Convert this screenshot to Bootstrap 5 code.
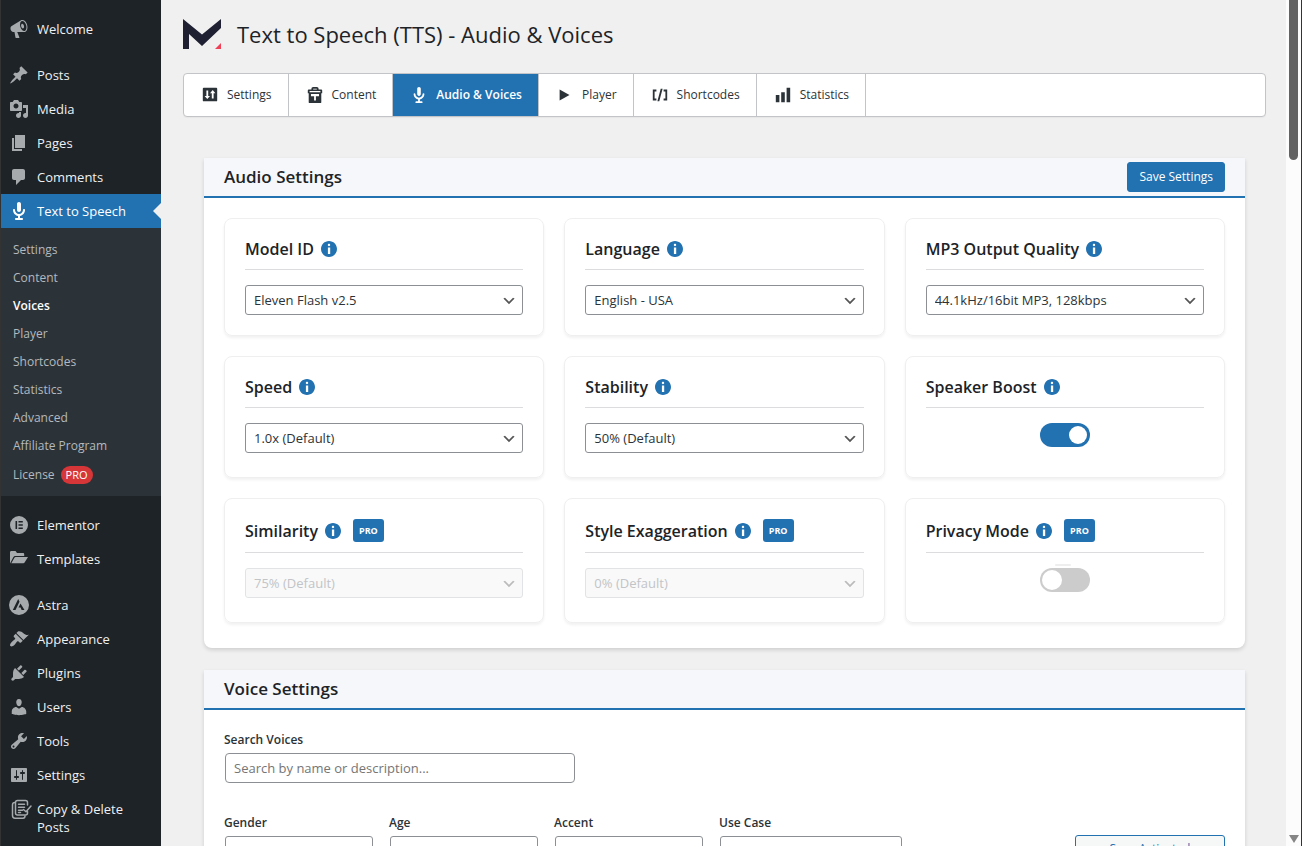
<!DOCTYPE html>
<html lang="en">
<head>
<meta charset="utf-8">
<meta name="viewport" content="width=device-width, initial-scale=1">
<title>Text to Speech (TTS) - Audio &amp; Voices</title>
<link href="https://cdn.jsdelivr.net/npm/bootstrap@5.3.0/dist/css/bootstrap.min.css" rel="stylesheet">
<style>
:root{--wp-blue:#2271b1;--wp-dark:#1d2327;--wp-sub:#2c3338;--wp-ink:#1d2327;--wp-icon:#a7aaad;}
body{font-family:"Open Sans","Noto Sans",sans-serif;font-size:13px;line-height:20px;color:#2c3338;background:#f0f0f0;}
svg{fill:currentColor;flex:none;}
.window-edge{width:1px;background:#333;}

/* Admin menu */
.admin-menu{width:160px;flex:none;background:var(--wp-dark);padding-top:12px;}
.menu-item{display:flex;align-items:flex-start;gap:8px;padding:8px 0 8px 8px;line-height:18px;color:#f0f0f1;text-decoration:none;position:relative;}
.menu-item svg{color:var(--wp-icon);margin:-1px 0;}
.gap-above{margin-top:12px;}
.menu-item.current{background:var(--wp-blue);color:#fff;}
.menu-item.current svg{color:#fff;}
.menu-item.current::after{content:"";position:absolute;right:0;top:9px;border:8px solid transparent;border-right-color:#f0f0f0;border-left:0;}
.submenu{background:var(--wp-sub);padding:8px 0 6px;font-size:12px;}
.submenu a{display:block;padding:4px 12px;color:#b4b9be;text-decoration:none;}
.submenu a.on{color:#fff;font-weight:600;}
.submenu a.license{display:flex;align-items:center;padding:5px 12px;}
.pro-pill{background:#d63638;color:#fff;font-size:11px;line-height:18px;padding:0 5px;margin-left:6px;}

/* Page header and tabs */
.tts-page{padding:14px 20px 0 22px;}
.app-head{margin:4px 0 23px;}
.app-title{font-size:22px;line-height:32px;font-weight:400;color:var(--wp-ink);}
.tabs{background:#fff;border:1px solid #c3c4c7;border-radius:4px;box-shadow:0 1px 1px rgba(0,0,0,.04);overflow:hidden;}
.tabs a{display:flex;align-items:center;gap:8px;height:42px;padding:0 16px 0 17px;border-right:1px solid #c3c4c7;color:#2c3338;text-decoration:none;font-size:12px;}
.tabs a.active{background:var(--wp-blue);color:#fff;font-weight:600;}
.tabs svg{color:var(--wp-sub);}
.tabs .active svg{color:#fff;}

/* Panels */
.panel-stack{padding:41px 21px 0;display:grid;gap:22px;}
.panel{background:#fff;border-radius:0 0 8px 8px;box-shadow:0 2px 4px rgba(0,0,0,.14);overflow:hidden;}
.panel-head{height:40px;background:#f6f7fb;border-bottom:2px solid var(--wp-blue);padding:0 20px;}
.panel-head h2{font-size:17px;line-height:20px;font-weight:600;color:var(--wp-ink);}
.btn-save{--bs-btn-color:#fff;--bs-btn-bg:var(--wp-blue);--bs-btn-border-color:var(--wp-blue);--bs-btn-hover-bg:#135e96;--bs-btn-hover-color:#fff;height:30px;padding:0 11px;font-size:12px;line-height:20px;border-radius:3px;}
.btn-line{--bs-btn-color:var(--wp-blue);--bs-btn-bg:#f6f7f7;--bs-btn-border-color:var(--wp-blue);--bs-btn-hover-bg:#f0f0f1;--bs-btn-hover-color:#135e96;width:150px;height:31px;padding:0 0 4px;font-size:12px;line-height:20px;border-radius:3px;}
.settings-grid{display:grid;grid-template-columns:repeat(3,1fr);gap:20px;padding:20px 20px 25px;}
.option{border:1px solid #efeff0;border-radius:8px;padding:20px;box-shadow:0 2px 3px rgba(0,0,0,.06);}
.option-title{display:flex;align-items:center;padding-bottom:10px;margin-bottom:15px;border-bottom:1px solid #dcdcde;font-size:16px;line-height:20px;font-weight:600;color:var(--wp-ink);}
.option-title svg{color:var(--wp-blue);margin-left:7px;}
.pro-tag{background:var(--wp-blue);color:#fff;font-size:9px;font-weight:700;line-height:23px;padding:0 6px;border-radius:3px;margin-left:12px;}

/* Controls */
.form-select,.form-control{height:30px;padding:0 24px 0 8px;font-size:13px;line-height:28px;color:#2c3338;border:1px solid #8c8f94;border-radius:3px;}
.form-select{background-image:url("data:image/svg+xml,%3Csvg xmlns='http://www.w3.org/2000/svg' viewBox='0 0 20 20'%3E%3Cpath d='M5 6l5 5 5-5 2 1-7 7-7-7z' fill='%23555'/%3E%3C/svg%3E");background-size:16px;background-position:right 5px top 55%;}
.form-select:disabled{background-color:#f9f9f9;border-color:#e2e3e5;color:#c2c4c7;background-image:url("data:image/svg+xml,%3Csvg xmlns='http://www.w3.org/2000/svg' viewBox='0 0 20 20'%3E%3Cpath d='M5 6l5 5 5-5 2 1-7 7-7-7z' fill='%23bbb'/%3E%3C/svg%3E");opacity:1;}
.form-control{border-radius:4px;}
.form-control::placeholder{color:#757575;}
.form-switch{height:34px;min-height:0;padding:0;position:relative;}
.form-switch .form-check-input{width:50px;height:24px;margin:0;float:none;border:0;background-color:#ccc;background-size:24px;--bs-form-switch-bg:url("data:image/svg+xml,%3Csvg xmlns='http://www.w3.org/2000/svg' viewBox='0 0 24 24'%3E%3Ccircle cx='12' cy='12' r='10' fill='%23fff'/%3E%3C/svg%3E");}
.form-switch .form-check-input:checked{background-color:var(--wp-blue);}
.form-switch .form-check-input:disabled{opacity:1;}
.lock-hint{position:absolute;top:-4px;left:50%;width:16px;height:2px;margin-left:-10px;background:#eee;border-radius:1px;}

/* Voice search */
.voice-body{padding:20px 20px 24px;}
.voice-body .form-select,.voice-body .form-control{margin-left:1px;}
.field-label{display:block;margin-bottom:3px;font-size:12px;font-weight:600;line-height:20px;}
.search-box{width:350px;}
.filters{gap:17px;margin-top:30px;}
.filter{width:148px;}
.filter-wide{width:182px;}

/* Scroll rail */
.scroll-rail{width:15px;background:#fcfcfc;flex:none;}
.scroll-thumb{width:9px;height:160px;background:#636363;border-radius:0 0 5px 5px;}
.scroll-arrow{border:5px solid transparent;border-top:8px solid #858585;border-bottom:0;margin-bottom:3px;}
</style>
</head>
<body>
<svg class="d-none">
  <symbol id="i-mic" viewBox="0 0 20 20"><path d="M12 9V3c0-1.1-.89-2-2-2-1.12 0-2 .94-2 2v6c0 1.1.9 2 2 2 1.13 0 2-.94 2-2zm4 0c0 2.97-2.16 5.43-5 5.91V17h2c.56 0 1 .45 1 1s-.44 1-1 1H7c-.55 0-1-.45-1-1s.45-1 1-1h2v-2.09C6.17 14.43 4 11.97 4 9c0-.55.45-1 1-1 .56 0 1 .45 1 1 0 2.21 1.8 4 4 4 2.21 0 4-1.79 4-4 0-.55.45-1 1-1 .56 0 1 .45 1 1z"/></symbol>
  <symbol id="i-sliders" viewBox="0 0 20 20"><path d="M18 16V4c0-.55-.45-1-1-1H3c-.55 0-1 .45-1 1v12c0 .55.45 1 1 1h14c.55 0 1-.45 1-1zM8 11h1c.55 0 1 .45 1 1s-.45 1-1 1H8v1.5c0 .28-.22.5-.5.5s-.5-.22-.5-.5V13H6c-.55 0-1-.45-1-1s.45-1 1-1h1V5.5c0-.28.22-.5.5-.5s.5.22.5.5V11zm5-2h-1c-.55 0-1-.45-1-1s.45-1 1-1h1V5.5c0-.28.22-.5.5-.5s.5.22.5.5V7h1c.55 0 1 .45 1 1s-.45 1-1 1h-1v5.5c0 .28-.22.5-.5.5s-.5-.22-.5-.5V9z"/></symbol>
  <symbol id="i-panel" viewBox="0 0 20 20"><path fill-rule="evenodd" d="M3 2h14a1 1 0 011 1v13a1 1 0 01-1 1H3a1 1 0 01-1-1V3a1 1 0 011-1zm3 3v6H4l3 3.500L10 11H8V5zm6 9V8h-2l3-3.500L16 8h-2v6z"/></symbol>
  <symbol id="i-info" viewBox="2 2 16 16"><path d="M10 2c4.42 0 8 3.58 8 8s-3.58 8-8 8-8-3.58-8-8 3.58-8 8-8zm1.200 4c0-.66-.54-1.200-1.200-1.200S8.800 5.340 8.800 6 9.340 7.200 10 7.200s1.200-.54 1.200-1.200zm0 9V8.500H8.900V15z"/></symbol>
</svg>

<div class="d-flex vh-100 overflow-hidden">
  <div class="window-edge"></div>
  <nav class="admin-menu" aria-label="Main menu">
    <a class="menu-item" href="#"><svg width="20" height="20" viewBox="0 0 20 20"><path fill-rule="evenodd" d="M18.150 5.940c.46 1.620.38 3.220-.02 4.480-.42 1.280-1.260 2.180-2.300 2.480-.16.060-.26.060-.4.060-.06.020-.12.020-.18.020-.06.020-.14.020-.22.020h-6.800l2.220 5.500c.02.140-.06.260-.14.340-.08.100-.24.160-.34.160H6.950c-.1 0-.26-.06-.34-.16-.08-.08-.16-.2-.14-.34l-1-5.500H4.250l-.02-.02c-.5.060-1.080-.18-1.540-.62s-.88-1.080-1.060-1.880c-.24-.8-.2-1.560-.02-2.200.18-.62.58-1.080 1.060-1.300l.02-.02 9-5.400c.1-.06.18-.1.240-.16.060-.04.140-.08.240-.12.160-.08.280-.12.500-.18 1.040-.3 2.240.1 3.220.98s1.840 2.240 2.260 3.860zm-2.580 5.980h-.02c.4-.1.740-.34 1.040-.7.580-.7.860-1.760.860-3.040 0-.64-.1-1.300-.28-1.980-.34-1.360-1.020-2.500-1.780-3.240s-1.680-1.100-2.460-.88c-.82.220-1.400.960-1.700 2-.32 1.040-.28 2.360.060 3.720.38 1.360 1 2.500 1.800 3.240.78.740 1.620 1.100 2.480.88zm-2.540-7.080c.22-.04.42-.02.62.04.38.160.76.48 1.020 1s.42 1.200.42 1.780c0 .3-.04.560-.12.800-.18.480-.44.840-.86.940-.34.100-.8-.06-1.140-.4s-.64-.86-.78-1.500c-.18-.62-.12-1.240.02-1.720s.48-.84.82-.94z"/></svg>Welcome</a>
    <a class="menu-item gap-above" href="#"><svg width="20" height="20" viewBox="0 0 20 20"><path d="M10.440 3.020l1.820-1.820 6.360 6.350-1.830 1.820c-1.050-.68-2.480-.57-3.410.36l-.75.75c-.92.93-1.040 2.350-.35 3.410l-1.830 1.820-2.410-2.410-2.800 2.790c-.42.42-3.380 2.710-3.800 2.290s1.860-3.390 2.280-3.810l2.790-2.790L4.100 9.360l1.830-1.820c1.050.69 2.480.57 3.400-.36l.75-.75c.93-.92 1.050-2.350.36-3.410z"/></svg>Posts</a>
    <a class="menu-item" href="#"><svg width="20" height="20" viewBox="0 0 20 20"><path d="M13 11V4c0-.55-.45-1-1-1h-1.670L9 1H5L3.670 3H2c-.55 0-1 .45-1 1v7c0 .55.45 1 1 1h10c.55 0 1-.45 1-1zM7 4.500c1.380 0 2.500 1.120 2.500 2.500S8.380 9.500 7 9.500 4.500 8.380 4.500 7 5.620 4.500 7 4.500zM14 6h5v10.500c0 1.380-1.120 2.500-2.500 2.500S14 17.880 14 16.500s1.120-2.500 2.500-2.500c.17 0 .34.020.5.050V9h-3V6zm-4 8.050V13h2v3.500c0 1.380-1.120 2.500-2.500 2.500S7 17.880 7 16.500 8.120 14 9.500 14c.17 0 .34.020.5.050z"/></svg>Media</a>
    <a class="menu-item" href="#"><svg width="20" height="20" viewBox="0 0 20 20"><path d="M6 15V2h10v13H6zm-1 1h8v2H3V5h2v11z"/></svg>Pages</a>
    <a class="menu-item" href="#"><svg width="20" height="20" viewBox="0 0 20 20"><path d="M5 2h9c1.100 0 2 .9 2 2v7c0 1.100-.9 2-2 2h-2l-5 5v-5H5c-1.100 0-2-.9-2-2V4c0-1.100.9-2 2-2z"/></svg>Comments</a>
    <a class="menu-item current" href="#" aria-current="true"><svg width="20" height="20"><use href="#i-mic"/></svg>Text to Speech</a>
    <div class="submenu">
      <a href="#">Settings</a>
      <a href="#">Content</a>
      <a href="#" class="on" aria-current="page">Voices</a>
      <a href="#">Player</a>
      <a href="#">Shortcodes</a>
      <a href="#">Statistics</a>
      <a href="#">Advanced</a>
      <a href="#">Affiliate Program</a>
      <a href="#" class="license">License<span class="pro-pill rounded-pill">PRO</span></a>
    </div>
    <a class="menu-item gap-above" href="#"><svg width="20" height="20" viewBox="0 0 20 20"><path fill-rule="evenodd" d="M10 1a9 9 0 110 18 9 9 0 010-18zM6.500 6v8h1.600V6zm3 0v1.600h4.300V6zm0 3.200v1.600h4.300V9.200zm0 3.200V14h4.300v-1.600z"/></svg>Elementor</a>
    <a class="menu-item" href="#"><svg width="20" height="20" viewBox="0 0 20 20"><path d="M1 14.500V3.500C1 2.700 1.500 2 2.300 2h4.200l1.500 2h6c.7 0 1.200.5 1.200 1.200V7H6.500C5.500 7 4.900 7.400 4.300 8.300z"/><path d="M6.700 8H19l-3.400 5.600c-.3.500-.7.700-1.300.7H2.300l3-5.300c.3-.6.700-1 1.400-1z"/></svg>Templates</a>
    <a class="menu-item gap-above" href="#"><svg width="20" height="20" viewBox="0 0 20 20"><path fill-rule="evenodd" d="M10 0a10 10 0 110 20 10 10 0 010-20zM9.200 4L3.800 14.900h2.700L10.500 6.800zM11.500 8.500l-2 4h2.100l1 2.400h2.900z"/></svg>Astra</a>
    <a class="menu-item" href="#"><svg width="20" height="20" viewBox="0 0 20 20"><path d="M14.480 11.060L7.410 3.990l1.500-1.500c.5-.56 2.300-.47 3.510.32 1.210.8 1.430 1.280 2.910 2.100 1.180.64 2.450 1.260 4.450.85zm-.71.71L6.700 4.700 4.930 6.470c-.39.39-.39 1.020 0 1.410l1.060 1.060c.39.39.39 1.030 0 1.420-.6.6-1.430 1.110-2.210 1.690-.35.26-.7.53-1.010.84C1.430 14.230.4 16.080 1.400 17.070c.99 1 2.840-.03 4.180-1.360.31-.31.58-.66.85-1.020.57-.78 1.080-1.610 1.690-2.210.39-.39 1.020-.39 1.410 0l1.060 1.060c.39.39 1.020.39 1.410 0z"/></svg>Appearance</a>
    <a class="menu-item" href="#"><svg width="20" height="20" viewBox="0 0 20 20"><path d="M13.110 4.360L9.870 7.600 8 5.730l3.240-3.240c.35-.34 1.050-.2 1.560.32.52.51.66 1.210.31 1.550zm-8 1.770l.91-1.120 9.010 9.010-1.190.84c-.71.71-2.630 1.160-3.820 1.160H6.140L4.900 17.260c-.59.59-1.540.59-2.120 0-.59-.58-.59-1.530 0-2.120l1.240-1.240v-3.880c0-1.130.4-3.190 1.090-3.890zm7.260 3.970l3.240-3.240c.34-.35 1.040-.21 1.550.31.52.51.66 1.210.31 1.550l-3.240 3.250z"/></svg>Plugins</a>
    <a class="menu-item" href="#"><svg width="20" height="20" viewBox="0 0 20 20"><path d="M10 9.250c-2.270 0-2.730-3.440-2.730-3.440C7 4.020 7.820 2 9.970 2c2.160 0 2.980 2.020 2.710 3.810 0 0-.41 3.440-2.680 3.440zm0 2.570L12.720 10c2.390 0 4.520 2.330 4.520 4.530v2.490s-3.650 1.130-7.240 1.130c-3.650 0-7.240-1.130-7.240-1.130v-2.490c0-2.250 1.940-4.480 4.470-4.480z"/></svg>Users</a>
    <a class="menu-item" href="#"><svg width="20" height="20" viewBox="0 0 20 20"><path d="M16.680 9.770c-1.340 1.340-3.300 1.670-4.950.99l-5.410 6.520c-.99.99-2.590.99-3.580 0s-.99-2.590 0-3.570l6.520-5.420c-.68-1.650-.35-3.610.99-4.950 1.280-1.280 3.120-1.620 4.720-1.060l-2.890 2.890 2.820 2.820 2.860-2.870c.53 1.580.18 3.390-1.080 4.650zM3.810 16.210c.4.39 1.040.39 1.430 0 .4-.4.4-1.040 0-1.430-.39-.4-1.030-.4-1.430 0-.39.39-.39 1.030 0 1.430z"/></svg>Tools</a>
    <a class="menu-item" href="#"><svg width="20" height="20"><use href="#i-sliders"/></svg>Settings</a>
    <a class="menu-item" href="#"><svg width="20" height="20" viewBox="0 0 20 20" overflow="visible"><g fill="none" stroke="currentColor" stroke-width="1.500" stroke-linecap="round" stroke-linejoin="round"><path d="M18.500 6V3.500c0-1.200-.8-2-2-2H8.500c-1.200 0-2 .8-2 2V14c0 1.200.8 2 2 2h8c1.200 0 2-.8 2-2v-1.500"/><path d="M6 3.500c-1.500 0-2.500.8-2.500 2.200V16.500c0 1.700 1 2.700 2.500 2.700h8c1.200 0 2-.8 2-2.200M9.500 5.200h6M9.500 8.200h6M9.500 11.200h4M9.500 13.500h2M14.500 10.500l2.500 2.300L22 7"/></g></svg><span>Copy &amp; Delete<br>Posts</span></a>
  </nav>

  <main class="flex-grow-1 tts-page">
    <header class="app-head d-flex align-items-center">
      <svg class="me-3" width="38" height="32" viewBox="0 0 38 32"><path fill="#1f2133" d="M0 1l19 15.500L38 1v9L19 28 6 16v15H0z"/><path fill="#ef4056" d="M38 25v6h-6z"/></svg>
      <h1 class="app-title m-0">Text to Speech (TTS) - Audio &amp; Voices</h1>
    </header>

    <nav class="tabs d-flex" aria-label="Plugin sections">
      <a href="#"><svg width="18" height="18"><use href="#i-panel"/></svg>Settings</a>
      <a href="#"><svg width="18" height="18" viewBox="0 0 20 20"><path fill-rule="evenodd" d="M6 4V3a2 2 0 012-2h4a2 2 0 012 2v1h3a1 1 0 011 1v3h-1v10a1 1 0 01-1 1H4a1 1 0 01-1-1V8H2V5a1 1 0 011-1zm2 0h4V3H8zM4 5.500v1.500h12V5.500zM5.500 9v2.500H9V16h2v-4.500h3.500V9z"/></svg>Content</a>
      <a href="#" class="active" aria-current="page"><svg width="18" height="18"><use href="#i-mic"/></svg>Audio &amp; Voices</a>
      <a href="#"><svg width="18" height="18" viewBox="0 0 20 20"><path d="M4 4l11 6-11 6V4z"/></svg>Player</a>
      <a href="#"><svg width="18" height="18" viewBox="0 0 20 20"><path d="M6 14H4V6h2V4H2v12h4M7.100 17h2.100l3.700-14h-2.100M14 4v2h2v8h-2v2h4V4"/></svg>Shortcodes</a>
      <a href="#"><svg width="18" height="18" viewBox="0 0 20 20"><path d="M18 18V2h-4v16h4zm-6 0V7H8v11h4zm-6 0v-8H2v8h4z"/></svg>Statistics</a>
    </nav>

    <div class="panel-stack">
      <section class="panel">
        <div class="panel-head d-flex align-items-center justify-content-between">
          <h2 class="m-0">Audio Settings</h2>
          <button type="button" class="btn btn-save">Save Settings</button>
        </div>
        <div class="settings-grid">
          <div class="option">
            <div class="option-title"><label for="model">Model ID</label><svg width="16" height="16"><use href="#i-info"/></svg></div>
            <select id="model" class="form-select"><option>Eleven Flash v2.5</option></select>
          </div>
          <div class="option">
            <div class="option-title"><label for="language">Language</label><svg width="16" height="16"><use href="#i-info"/></svg></div>
            <select id="language" class="form-select"><option>English - USA</option></select>
          </div>
          <div class="option">
            <div class="option-title"><label for="quality">MP3 Output Quality</label><svg width="16" height="16"><use href="#i-info"/></svg></div>
            <select id="quality" class="form-select"><option>44.1kHz/16bit MP3, 128kbps</option></select>
          </div>
          <div class="option">
            <div class="option-title"><label for="speed">Speed</label><svg width="16" height="16"><use href="#i-info"/></svg></div>
            <select id="speed" class="form-select"><option>1.0x (Default)</option></select>
          </div>
          <div class="option">
            <div class="option-title"><label for="stability">Stability</label><svg width="16" height="16"><use href="#i-info"/></svg></div>
            <select id="stability" class="form-select"><option>50% (Default)</option></select>
          </div>
          <div class="option">
            <div class="option-title"><label for="boost">Speaker Boost</label><svg width="16" height="16"><use href="#i-info"/></svg></div>
            <div class="form-check form-switch m-0 d-flex justify-content-center"><input class="form-check-input" type="checkbox" role="switch" id="boost" checked></div>
          </div>
          <div class="option">
            <div class="option-title"><label for="similarity">Similarity</label><svg width="16" height="16"><use href="#i-info"/></svg><span class="pro-tag">PRO</span></div>
            <select id="similarity" class="form-select" disabled><option>75% (Default)</option></select>
          </div>
          <div class="option">
            <div class="option-title"><label for="style">Style Exaggeration</label><svg width="16" height="16"><use href="#i-info"/></svg><span class="pro-tag">PRO</span></div>
            <select id="style" class="form-select" disabled><option>0% (Default)</option></select>
          </div>
          <div class="option">
            <div class="option-title"><label for="privacy">Privacy Mode</label><svg width="16" height="16"><use href="#i-info"/></svg><span class="pro-tag">PRO</span></div>
            <div class="form-check form-switch m-0 d-flex justify-content-center"><span class="lock-hint"></span><input class="form-check-input" type="checkbox" role="switch" id="privacy" disabled></div>
          </div>
        </div>
      </section>

      <section class="panel">
        <div class="panel-head d-flex align-items-center"><h2 class="m-0">Voice Settings</h2></div>
        <div class="voice-body">
          <label class="field-label" for="search">Search Voices</label>
          <input id="search" type="text" class="form-control search-box" placeholder="Search by name or description...">
          <div class="filters d-flex align-items-end">
            <div class="filter"><label class="field-label" for="gender">Gender</label><select id="gender" class="form-select"><option>All Genders</option></select></div>
            <div class="filter"><label class="field-label" for="age">Age</label><select id="age" class="form-select"><option>All Ages</option></select></div>
            <div class="filter"><label class="field-label" for="accent">Accent</label><select id="accent" class="form-select"><option>All Accents</option></select></div>
            <div class="filter-wide"><label class="field-label" for="usecase">Use Case</label><select id="usecase" class="form-select"><option>All Use Cases</option></select></div>
            <button type="button" class="btn btn-line ms-auto">Save Activated</button>
          </div>
        </div>
      </section>
    </div>
  </main>

  <div class="scroll-rail d-flex flex-column align-items-center justify-content-between" aria-hidden="true">
    <div class="scroll-thumb"></div><div class="scroll-arrow"></div>
  </div>
  <div class="window-edge"></div>
</div>
<script src="https://cdn.jsdelivr.net/npm/bootstrap@5.3.0/dist/js/bootstrap.bundle.min.js"></script>
</body>
</html>
